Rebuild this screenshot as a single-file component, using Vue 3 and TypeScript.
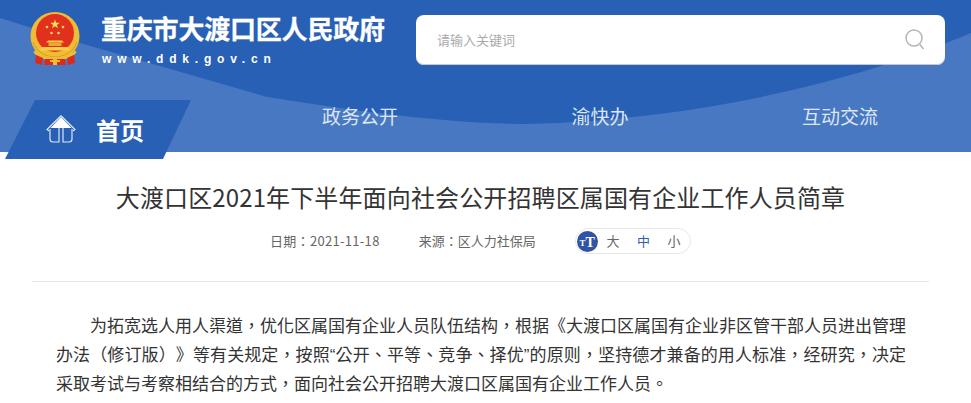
<script setup lang="ts">
const navItems = ['政务公开', '渝快办', '互动交流']
const sizes = ['大', '中', '小']
const smallStars = [
  [17, 15],
  [33, 15],
  [21.5, 21],
  [28.5, 21],
]
</script>

<template>
  <div class="page">
    <header class="header">
      <svg class="wave" viewBox="0 0 971 152" preserveAspectRatio="none">
        <path d="M0 18 L80 43 L267 97 C330 107 440 124 527 124 C700 120 860 80 971 33 L971 152 L0 152 Z" fill="#4878c2" />
      </svg>

      <div class="top">
        <svg class="emblem" viewBox="0 0 50 54">
          <ellipse cx="25" cy="24" rx="24.5" ry="24" fill="#f0bc35" />
          <path d="M3 30c3 9 12 15 22 15s19-6 22-15" fill="none" stroke="#d99a20" stroke-width="1" />
          <circle cx="25" cy="21" r="19" fill="#e2301f" />
          <path d="M25 7.5l1.2 3.3h3.6l-2.9 2.1 1.1 3.4-3-2.1-3 2.1 1.1-3.4-2.9-2.1h3.6z" fill="#f9dc55" />
          <circle v-for="(p, i) in smallStars" :key="i" :cx="p[0]" :cy="p[1]" r="1.3" fill="#f9dc55" />
          <path d="M18 28.5h14l2 2H16z" fill="#f6cf48" />
          <path d="M18.5 30.5h13v3.5h-13z" fill="#e9a92c" />
          <path d="M11 35h28l1 3.5H10z" fill="#f6cf48" />
          <path d="M5 38c5 5 12 7 20 7s15-2 20-7l1.5 2.5C42 46 34 48.5 25 48.5S8 46 3.5 40.5z" fill="#f0bc35" />
          <path d="M6 43l7 3-1 7-7-2zM44 43l-7 3 1 7 7-2zM15 47h20l1 6H14z" fill="#dc2a1c" />
          <path d="M20 48h10v2H20zM23 46h4v7h-4z" fill="#f0bc35" />
        </svg>
        <div class="brand">
          <h1>重庆市大渡口区人民政府</h1>
          <p>www.ddk.gov.cn</p>
        </div>
        <div class="search">
          <input type="text" placeholder="请输入关键词" />
          <svg class="search-icon" viewBox="0 0 22 22">
            <circle cx="9" cy="9" r="8" fill="none" stroke="#b5b5b5" stroke-width="1.5" />
            <path d="M15 15.5l3.5 4.5" stroke="#b5b5b5" stroke-width="1.5" fill="none" />
          </svg>
        </div>
      </div>

      <nav class="nav">
        <a class="home">
          <svg class="home-icon" viewBox="0 0 30 28">
            <path d="M15 2L4.5 13h21z" fill="#fff" />
            <path d="M15 .8L1 14.5l2 1.5M15 .8l14 13.7-2 1.5" stroke="#dbe5f5" stroke-width="1.2" fill="none" />
            <path d="M4 14v10a3 3 0 0 0 3 3h6V13M26 14v10a3 3 0 0 1-3 3h-6V13" stroke="#dbe5f5" stroke-width="1.2" fill="none" />
          </svg>
          <span>首页</span>
        </a>
        <ul class="nav-list">
          <li v-for="item in navItems" :key="item">{{ item }}</li>
        </ul>
      </nav>
    </header>

    <main class="article">
      <h2>大渡口区2021年下半年面向社会公开招聘区属国有企业工作人员简章</h2>
      <div class="meta">
        <span class="date">日期：2021-11-18</span>
        <span class="source">来源：区人力社保局</span>
        <div class="font-size">
          <span class="font-badge"><i>T</i><b>T</b></span>
          <span v-for="s in sizes" :key="s" class="size" :class="{ active: s === '中' }">{{ s }}</span>
        </div>
      </div>
      <div class="content">
        <p>为拓宽选人用人渠道，优化区属国有企业人员队伍结构，根据《大渡口区属国有企业非区管干部人员进出管理办法（修订版）》等有关规定，按照“公开、平等、竞争、择优”的原则，坚持德才兼备的用人标准，经研究，决定采取考试与考察相结合的方式，面向社会公开招聘大渡口区属国有企业工作人员。</p>
      </div>
    </main>
  </div>
</template>

<style>
html,
body {
  margin: 0;
  background: #fff;
  overflow: hidden;
}
</style>

<style scoped>
.page {
  width: 971px;
  height: 403px;
  overflow: hidden;
  font-family: "Noto Sans CJK SC", "Liberation Sans", sans-serif;
}
.header {
  position: relative;
  height: 152px;
  background: #2860b6;
}
.wave {
  position: absolute;
  left: 0;
  top: 0;
  width: 971px;
  height: 152px;
}
.top {
  position: relative;
  display: flex;
  align-items: flex-start;
  padding: 12px 26px 0 30px;
  height: 100px;
  box-sizing: border-box;
}
.emblem {
  width: 50px;
  height: 54px;
  flex: none;
}
.brand {
  margin-left: 21px;
  color: #fff;
  flex: none;
}
.brand h1 {
  margin: 0;
  font-size: 26px;
  line-height: 34px;
  font-weight: 700;
  letter-spacing: -0.2px;
  -webkit-text-stroke: 0.3px #fff;
  position: relative;
  top: -1px;
}
.brand p {
  margin: 5px 0 0 1px;
  font: 700 12px/16px "Liberation Sans", sans-serif;
  letter-spacing: 5.8px;
}
.search {
  position: relative;
  margin: 3px 0 0 auto;
  width: 529px;
  height: 50px;
  background: #fff;
  border-radius: 8px;
  box-shadow: inset 0 -1px 0 #c8c8c8;
}
.search input {
  width: 440px;
  height: 48px;
  padding: 0 0 0 21px;
  border: 0;
  outline: 0;
  background: transparent;
  font: 13px "Noto Sans CJK SC", sans-serif;
}
.search input::placeholder {
  color: #aaa;
}
.search-icon {
  position: absolute;
  right: 18px;
  top: 14px;
  width: 22px;
  height: 22px;
}
.nav {
  position: relative;
  display: flex;
  align-items: flex-start;
  height: 52px;
}
.home {
  display: flex;
  align-items: center;
  box-sizing: border-box;
  flex: none;
  margin-left: 5px;
  width: 186px;
  height: 59px;
  padding: 0 0 1px 41px;
  background: #2860b6;
  clip-path: polygon(30px 0, 100% 0, 158px 100%, 0 100%);
  color: #fff;
}
.home-icon {
  width: 30px;
  height: 28px;
  flex: none;
}
.home span {
  margin-left: 20px;
  font-size: 24px;
  font-weight: 700;
}
.nav-list {
  display: flex;
  margin: 1px 0 0 49px;
  padding: 0;
  list-style: none;
}
.nav-list li {
  width: 240px;
  text-align: center;
  font-size: 19px;
  line-height: 30px;
  color: #dce6f5;
}
.article {
  margin: 0 42px 0 32px;
}
.article h2 {
  margin: 0;
  padding-top: 28px;
  font-size: 24px;
  line-height: 36px;
  font-weight: 400;
  letter-spacing: 0.13px;
  color: #333;
  text-align: center;
  position: relative;
  top: -1px;
}
.meta {
  display: flex;
  align-items: flex-start;
  height: 53px;
  padding: 12px 0 0 238px;
  font-family: "Noto Sans CJK TC", "Liberation Sans", sans-serif;
  font-size: 13px;
  line-height: 26px;
  color: #666;
  border-bottom: 1px solid #e5e5e5;
}
.date {
  letter-spacing: 0.3px;
}
.source {
  margin-left: 39px;
}
.font-size {
  display: flex;
  align-items: center;
  margin-left: 39px;
  width: 116px;
  height: 26px;
  box-sizing: border-box;
  border: 1px solid #e8e8e8;
  border-radius: 13px;
  padding-left: 1px;
}
.font-badge {
  display: flex;
  align-items: flex-end;
  justify-content: center;
  flex: none;
  width: 21px;
  height: 21px;
  border-radius: 50%;
  background: #2f53a5;
  color: #fff;
  font-family: "Liberation Serif", serif;
  font-size: 14px;
  line-height: 19px;
}
.font-badge i {
  font-style: normal;
  font-size: 9px;
  font-weight: 700;
  line-height: 17px;
}
.size {
  width: 30.5px;
  flex: none;
  text-align: center;
}
.size.active {
  color: #2f5fb0;
}
.content {
  padding: 30px 23px 0 24px;
}
.content p {
  margin: 0;
  font-family: "Liberation Sans", "Noto Sans CJK TC", sans-serif;
  font-size: 17px;
  line-height: 29px;
  color: #333;
  text-indent: 2em;
  text-align: justify;
  text-spacing-trim: space-all;
}
</style>
